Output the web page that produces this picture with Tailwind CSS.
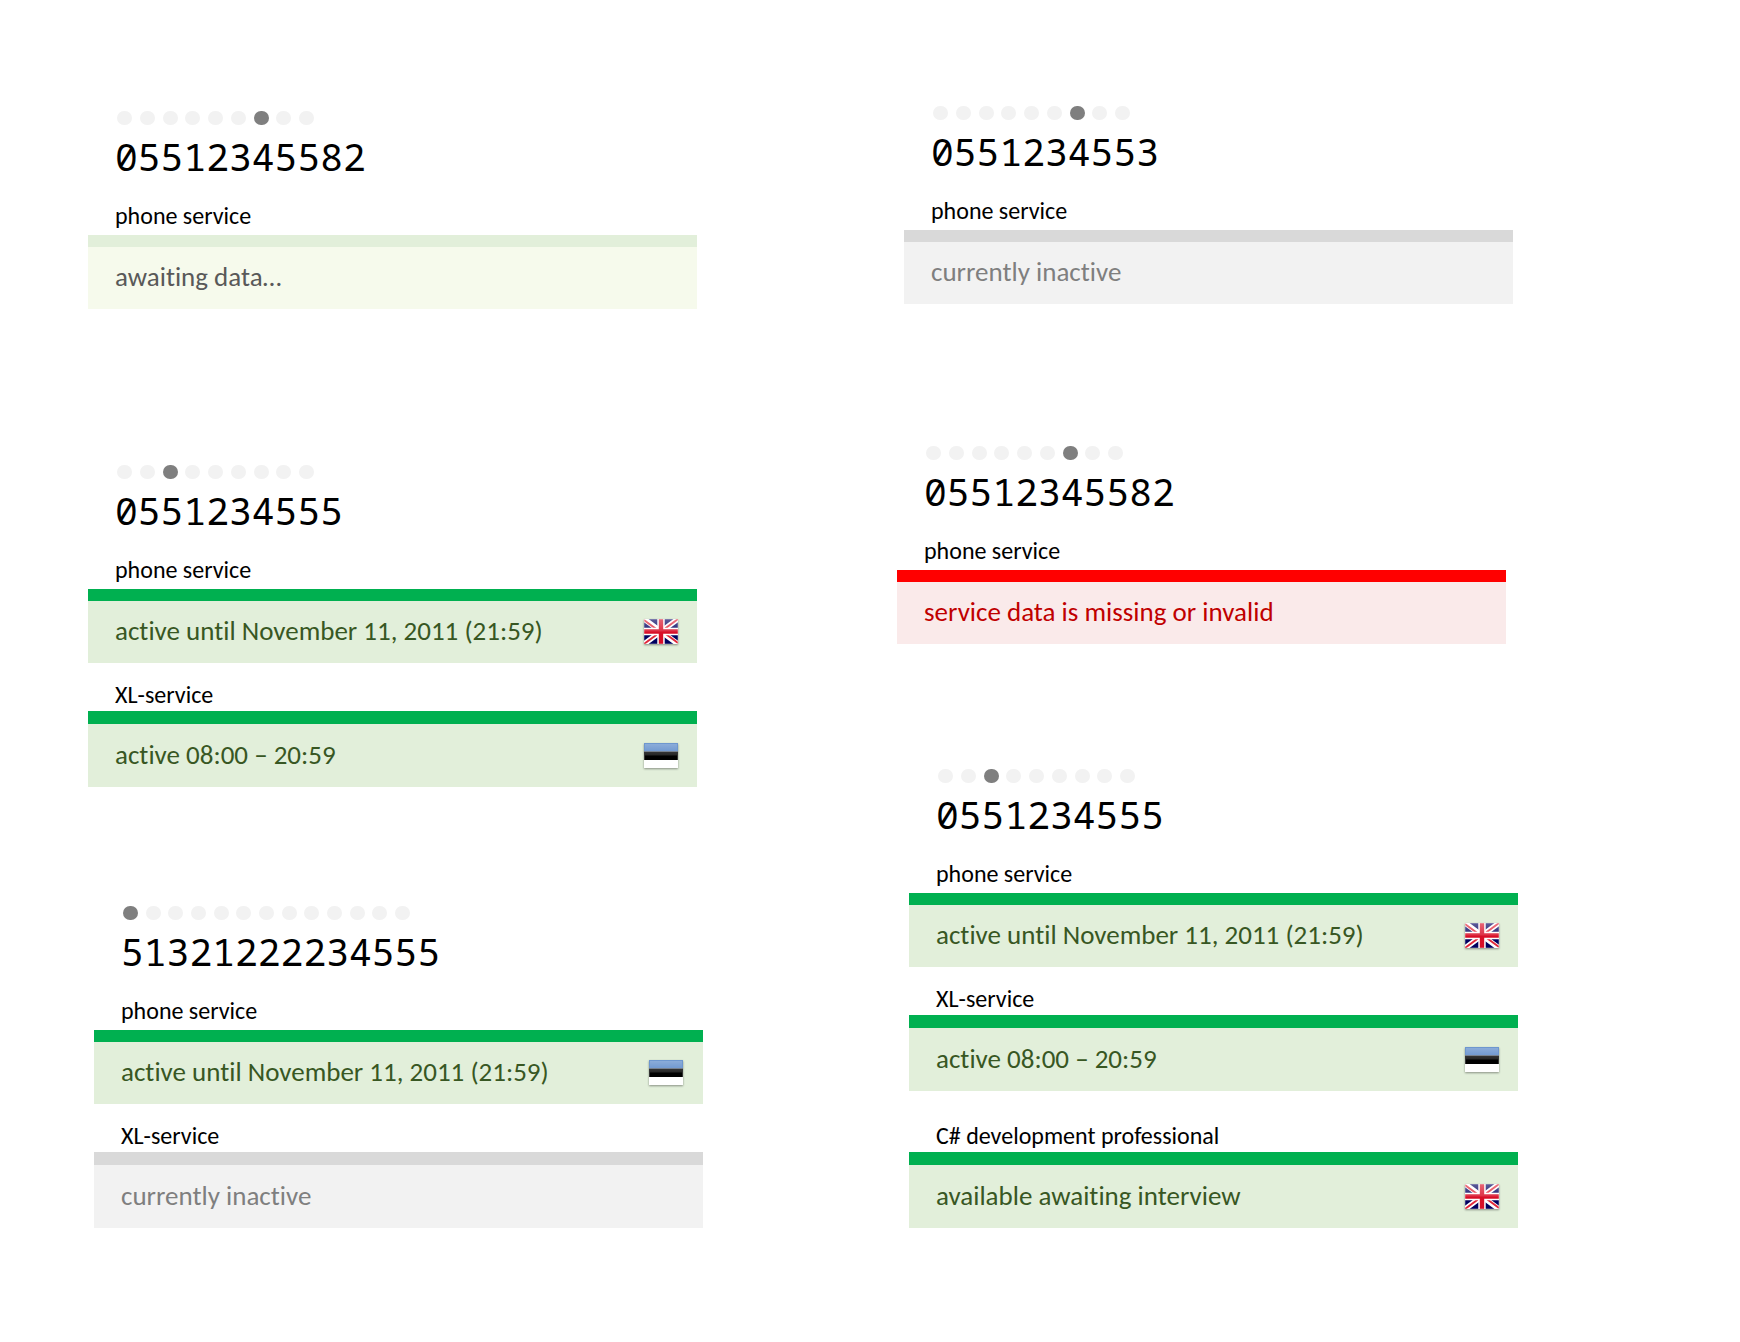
<!DOCTYPE html>
<html lang="en">
<head>
<meta charset="utf-8">
<meta name="viewport" content="width=device-width, initial-scale=1">
<title>Phone services</title>
<script src="https://cdn.jsdelivr.net/npm/@tailwindcss/browser@4"></script>
</head>
<body class="bg-white text-black [font-variant-ligatures:none] font-[Carlito,Calibri,'Open_Sans',sans-serif]">

<!-- Shared flag drawings -->
<svg class="absolute size-0" aria-hidden="true">
  <defs>
    <linearGradient id="gloss" x1="0" y1="0" x2="0" y2="1">
      <stop offset="0" stop-color="#fff" stop-opacity=".36"/>
      <stop offset="1" stop-color="#fff" stop-opacity=".14"/>
    </linearGradient>
    <clipPath id="sheet"><rect width="34" height="25"/></clipPath>
    <symbol id="flag-gb" viewBox="0 0 34 25">
      <g clip-path="url(#sheet)">
        <rect width="34" height="25" fill="#00005f"/>
        <path d="M0 0L34 25M34 0L0 25" stroke="#fff" stroke-width="5.4"/>
        <path d="M0 1L17 13.5M34 0L17 12.5M34 24L17 11.5M0 25L17 12.5" stroke="#e0283a" stroke-width="1.9"/>
        <path d="M17 0V25M0 12.5H34" stroke="#fff" stroke-width="7.4"/>
        <path d="M17 0V25M0 12.5H34" stroke="#d80f28" stroke-width="4.4"/>
        <rect width="34" height="12.5" fill="url(#gloss)"/>
        <rect x=".5" y=".5" width="33" height="24" fill="none" stroke="#fff" stroke-opacity=".2"/>
      </g>
    </symbol>
    <symbol id="flag-ee" viewBox="0 0 34 25">
      <rect width="34" height="25" fill="#fff"/>
      <rect width="34" height="8.5" fill="#4a7dc4"/>
      <rect y="8.5" width="34" height="8.5" fill="#000"/>
      <rect y="1" x="1" width="32" height="11.5" fill="url(#gloss)"/>
      <rect x=".5" y=".5" width="33" height="24" fill="none" stroke="#fff" stroke-opacity=".2"/>
    </symbol>
  </defs>
</svg>

<main class="grid grid-cols-[809fr_843fr] pl-[88px] pb-[114px]">

  <div class="pt-[111px] pr-[194px]">

    <article class="mr-[6px]">
      <nav class="ml-[29px] flex w-[197px] max-w-full justify-between" aria-label="Pages">
        <button class="h-[14px] w-[15px] rounded-full bg-[#f2f2f2]" aria-label="1"></button>
        <button class="h-[14px] w-[15px] rounded-full bg-[#f2f2f2]" aria-label="2"></button>
        <button class="h-[14px] w-[15px] rounded-full bg-[#f2f2f2]" aria-label="3"></button>
        <button class="h-[14px] w-[15px] rounded-full bg-[#f2f2f2]" aria-label="4"></button>
        <button class="h-[14px] w-[15px] rounded-full bg-[#f2f2f2]" aria-label="5"></button>
        <button class="h-[14px] w-[15px] rounded-full bg-[#f2f2f2]" aria-label="6"></button>
        <button class="h-[14px] w-[15px] rounded-full bg-[#7f7f7f]" aria-label="7" aria-current="true"></button>
        <button class="h-[14px] w-[15px] rounded-full bg-[#f2f2f2]" aria-label="8"></button>
        <button class="h-[14px] w-[15px] rounded-full bg-[#f2f2f2]" aria-label="9"></button>
      </nav>
      <h2 class="mt-[7px] pl-[27px] text-[38px] leading-[48px] font-['Noto_Sans_Mono','DejaVu_Sans_Mono',monospace]">05512345582</h2>
      <h3 class="mt-[22px] pb-[5px] pl-[27px] text-[24px] leading-7">phone service</h3>
      <div class="flex h-[74px] items-center justify-between border-t-[12px] border-[#e2efda] bg-[#f6faec] pr-[19px] pb-[2px] pl-[27px] text-[27px] text-[#595959]">
        <p>awaiting data…</p>
      </div>
    </article>

    <article class="mt-[156px] mr-[6px]">
      <nav class="ml-[29px] flex w-[197px] max-w-full justify-between" aria-label="Pages">
        <button class="h-[14px] w-[15px] rounded-full bg-[#f2f2f2]" aria-label="1"></button>
        <button class="h-[14px] w-[15px] rounded-full bg-[#f2f2f2]" aria-label="2"></button>
        <button class="h-[14px] w-[15px] rounded-full bg-[#7f7f7f]" aria-label="3" aria-current="true"></button>
        <button class="h-[14px] w-[15px] rounded-full bg-[#f2f2f2]" aria-label="4"></button>
        <button class="h-[14px] w-[15px] rounded-full bg-[#f2f2f2]" aria-label="5"></button>
        <button class="h-[14px] w-[15px] rounded-full bg-[#f2f2f2]" aria-label="6"></button>
        <button class="h-[14px] w-[15px] rounded-full bg-[#f2f2f2]" aria-label="7"></button>
        <button class="h-[14px] w-[15px] rounded-full bg-[#f2f2f2]" aria-label="8"></button>
        <button class="h-[14px] w-[15px] rounded-full bg-[#f2f2f2]" aria-label="9"></button>
      </nav>
      <h2 class="mt-[7px] pl-[27px] text-[38px] leading-[48px] font-['Noto_Sans_Mono','DejaVu_Sans_Mono',monospace]">0551234555</h2>
      <h3 class="mt-[22px] pb-[5px] pl-[27px] text-[24px] leading-7">phone service</h3>
      <div class="flex h-[74px] items-center justify-between border-t-[12px] border-[#00b050] bg-[#e2efda] pr-[19px] pb-[2px] pl-[27px] text-[27px] text-[#385723]">
        <p>active until November 11, 2011 (21:59)</p>
        <svg class="h-[25px] w-[34px] shadow-[0_1px_2px_#00000066]" role="img" aria-label="English"><use href="#flag-gb"/></svg>
      </div>
      <h3 class="mt-[18px] pb-[2px] pl-[27px] text-[24px] leading-7">XL-service</h3>
      <div class="flex h-[76px] items-center justify-between border-t-[13px] border-[#00b050] bg-[#e2efda] pr-[19px] pl-[27px] text-[27px] text-[#385723]">
        <p>active 08:00 – 20:59</p>
        <svg class="h-[25px] w-[34px] shadow-[0_1px_2px_#00000066]" role="img" aria-label="Estonian"><use href="#flag-ee"/></svg>
      </div>
    </article>

    <article class="mt-[119px] ml-[6px]">
      <nav class="ml-[29px] flex w-[287px] max-w-full justify-between" aria-label="Pages">
        <button class="h-[14px] w-[15px] rounded-full bg-[#7f7f7f]" aria-label="1" aria-current="true"></button>
        <button class="h-[14px] w-[15px] rounded-full bg-[#f2f2f2]" aria-label="2"></button>
        <button class="h-[14px] w-[15px] rounded-full bg-[#f2f2f2]" aria-label="3"></button>
        <button class="h-[14px] w-[15px] rounded-full bg-[#f2f2f2]" aria-label="4"></button>
        <button class="h-[14px] w-[15px] rounded-full bg-[#f2f2f2]" aria-label="5"></button>
        <button class="h-[14px] w-[15px] rounded-full bg-[#f2f2f2]" aria-label="6"></button>
        <button class="h-[14px] w-[15px] rounded-full bg-[#f2f2f2]" aria-label="7"></button>
        <button class="h-[14px] w-[15px] rounded-full bg-[#f2f2f2]" aria-label="8"></button>
        <button class="h-[14px] w-[15px] rounded-full bg-[#f2f2f2]" aria-label="9"></button>
        <button class="h-[14px] w-[15px] rounded-full bg-[#f2f2f2]" aria-label="10"></button>
        <button class="h-[14px] w-[15px] rounded-full bg-[#f2f2f2]" aria-label="11"></button>
        <button class="h-[14px] w-[15px] rounded-full bg-[#f2f2f2]" aria-label="12"></button>
        <button class="h-[14px] w-[15px] rounded-full bg-[#f2f2f2]" aria-label="13"></button>
      </nav>
      <h2 class="mt-[7px] pl-[27px] text-[38px] leading-[48px] font-['Noto_Sans_Mono','DejaVu_Sans_Mono',monospace]">51321222234555</h2>
      <h3 class="mt-[22px] pb-[5px] pl-[27px] text-[24px] leading-7">phone service</h3>
      <div class="flex h-[74px] items-center justify-between border-t-[12px] border-[#00b050] bg-[#e2efda] pr-[20px] pb-[2px] pl-[27px] text-[27px] text-[#385723]">
        <p>active until November 11, 2011 (21:59)</p>
        <svg class="h-[25px] w-[34px] shadow-[0_1px_2px_#00000066]" role="img" aria-label="Estonian"><use href="#flag-ee"/></svg>
      </div>
      <h3 class="mt-[18px] pb-[2px] pl-[27px] text-[24px] leading-7">XL-service</h3>
      <div class="flex h-[76px] items-center justify-between border-t-[13px] border-[#d9d9d9] bg-[#f2f2f2] pr-[19px] pl-[27px] text-[27px] text-[#7f7f7f]">
        <p>currently inactive</p>
      </div>
    </article>
  </div>

  <div class="pt-[106px] pr-[222px]">

    <article class="mr-[5px] ml-[7px]">
      <nav class="ml-[29px] flex w-[197px] max-w-full justify-between" aria-label="Pages">
        <button class="h-[14px] w-[15px] rounded-full bg-[#f2f2f2]" aria-label="1"></button>
        <button class="h-[14px] w-[15px] rounded-full bg-[#f2f2f2]" aria-label="2"></button>
        <button class="h-[14px] w-[15px] rounded-full bg-[#f2f2f2]" aria-label="3"></button>
        <button class="h-[14px] w-[15px] rounded-full bg-[#f2f2f2]" aria-label="4"></button>
        <button class="h-[14px] w-[15px] rounded-full bg-[#f2f2f2]" aria-label="5"></button>
        <button class="h-[14px] w-[15px] rounded-full bg-[#f2f2f2]" aria-label="6"></button>
        <button class="h-[14px] w-[15px] rounded-full bg-[#7f7f7f]" aria-label="7" aria-current="true"></button>
        <button class="h-[14px] w-[15px] rounded-full bg-[#f2f2f2]" aria-label="8"></button>
        <button class="h-[14px] w-[15px] rounded-full bg-[#f2f2f2]" aria-label="9"></button>
      </nav>
      <h2 class="mt-[7px] pl-[27px] text-[38px] leading-[48px] font-['Noto_Sans_Mono','DejaVu_Sans_Mono',monospace]">0551234553</h2>
      <h3 class="mt-[22px] pb-[5px] pl-[27px] text-[24px] leading-7">phone service</h3>
      <div class="flex h-[74px] items-center justify-between border-t-[12px] border-[#d9d9d9] bg-[#f2f2f2] pr-[19px] pb-[2px] pl-[27px] text-[27px] text-[#7f7f7f]">
        <p>currently inactive</p>
      </div>
    </article>

    <article class="mt-[142px] mr-[12px]">
      <nav class="ml-[29px] flex w-[197px] max-w-full justify-between" aria-label="Pages">
        <button class="h-[14px] w-[15px] rounded-full bg-[#f2f2f2]" aria-label="1"></button>
        <button class="h-[14px] w-[15px] rounded-full bg-[#f2f2f2]" aria-label="2"></button>
        <button class="h-[14px] w-[15px] rounded-full bg-[#f2f2f2]" aria-label="3"></button>
        <button class="h-[14px] w-[15px] rounded-full bg-[#f2f2f2]" aria-label="4"></button>
        <button class="h-[14px] w-[15px] rounded-full bg-[#f2f2f2]" aria-label="5"></button>
        <button class="h-[14px] w-[15px] rounded-full bg-[#f2f2f2]" aria-label="6"></button>
        <button class="h-[14px] w-[15px] rounded-full bg-[#7f7f7f]" aria-label="7" aria-current="true"></button>
        <button class="h-[14px] w-[15px] rounded-full bg-[#f2f2f2]" aria-label="8"></button>
        <button class="h-[14px] w-[15px] rounded-full bg-[#f2f2f2]" aria-label="9"></button>
      </nav>
      <h2 class="mt-[7px] pl-[27px] text-[38px] leading-[48px] font-['Noto_Sans_Mono','DejaVu_Sans_Mono',monospace]">05512345582</h2>
      <h3 class="mt-[22px] pb-[5px] pl-[27px] text-[24px] leading-7">phone service</h3>
      <div class="flex h-[74px] items-center justify-between border-t-[12px] border-[#ff0000] bg-[#faeaea] pr-[19px] pb-[2px] pl-[27px] text-[27px] text-[#c00000]">
        <p>service data is missing or invalid</p>
      </div>
    </article>

    <article class="mt-[125px] ml-[12px]">
      <nav class="ml-[29px] flex w-[197px] max-w-full justify-between" aria-label="Pages">
        <button class="h-[14px] w-[15px] rounded-full bg-[#f2f2f2]" aria-label="1"></button>
        <button class="h-[14px] w-[15px] rounded-full bg-[#f2f2f2]" aria-label="2"></button>
        <button class="h-[14px] w-[15px] rounded-full bg-[#7f7f7f]" aria-label="3" aria-current="true"></button>
        <button class="h-[14px] w-[15px] rounded-full bg-[#f2f2f2]" aria-label="4"></button>
        <button class="h-[14px] w-[15px] rounded-full bg-[#f2f2f2]" aria-label="5"></button>
        <button class="h-[14px] w-[15px] rounded-full bg-[#f2f2f2]" aria-label="6"></button>
        <button class="h-[14px] w-[15px] rounded-full bg-[#f2f2f2]" aria-label="7"></button>
        <button class="h-[14px] w-[15px] rounded-full bg-[#f2f2f2]" aria-label="8"></button>
        <button class="h-[14px] w-[15px] rounded-full bg-[#f2f2f2]" aria-label="9"></button>
      </nav>
      <h2 class="mt-[7px] pl-[27px] text-[38px] leading-[48px] font-['Noto_Sans_Mono','DejaVu_Sans_Mono',monospace]">0551234555</h2>
      <h3 class="mt-[22px] pb-[5px] pl-[27px] text-[24px] leading-7">phone service</h3>
      <div class="flex h-[74px] items-center justify-between border-t-[12px] border-[#00b050] bg-[#e2efda] pr-[19px] pb-[2px] pl-[27px] text-[27px] text-[#385723]">
        <p>active until November 11, 2011 (21:59)</p>
        <svg class="h-[25px] w-[34px] shadow-[0_1px_2px_#00000066]" role="img" aria-label="English"><use href="#flag-gb"/></svg>
      </div>
      <h3 class="mt-[18px] pb-[2px] pl-[27px] text-[24px] leading-7">XL-service</h3>
      <div class="flex h-[76px] items-center justify-between border-t-[13px] border-[#00b050] bg-[#e2efda] pr-[19px] pl-[27px] text-[27px] text-[#385723]">
        <p>active 08:00 – 20:59</p>
        <svg class="h-[25px] w-[34px] shadow-[0_1px_2px_#00000066]" role="img" aria-label="Estonian"><use href="#flag-ee"/></svg>
      </div>
      <h3 class="mt-[31px] pb-[2px] pl-[27px] text-[24px] leading-7">C# development professional</h3>
      <div class="flex h-[76px] items-center justify-between border-t-[13px] border-[#00b050] bg-[#e2efda] pr-[19px] pl-[27px] text-[27px] text-[#385723]">
        <p>available awaiting interview</p>
        <svg class="h-[25px] w-[34px] shadow-[0_1px_2px_#00000066]" role="img" aria-label="English"><use href="#flag-gb"/></svg>
      </div>
    </article>
  </div>
</main>
</body>
</html>
